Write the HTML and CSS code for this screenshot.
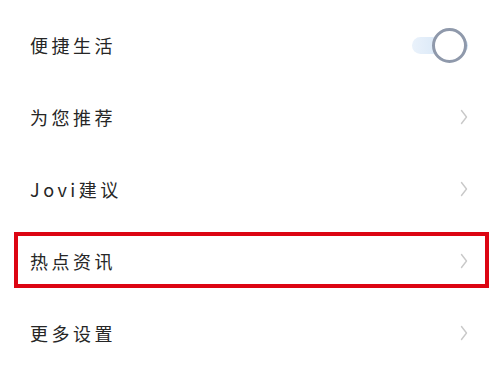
FILE: index.html
```html
<!DOCTYPE html>
<html lang="zh">
<head>
<meta charset="utf-8">
<link rel="stylesheet" href="styles.css">
</head>
<body>
<ul class="list">
  <li class="row">
    <span class="label">便捷生活</span>
    <span class="toggle"><span class="knob"></span></span>
  </li>
  <li class="row">
    <span class="label">为您推荐</span>
    <svg class="chev" viewBox="0 0 8 16" width="8" height="16"><path d="M1.5 1.5 L6.5 8 L1.5 14.5" fill="none" stroke="#c9c9c9" stroke-width="1.4" stroke-linecap="round" stroke-linejoin="round"/></svg>
  </li>
  <li class="row">
    <span class="label">Jovi建议</span>
    <svg class="chev" viewBox="0 0 8 16" width="8" height="16"><path d="M1.5 1.5 L6.5 8 L1.5 14.5" fill="none" stroke="#c9c9c9" stroke-width="1.4" stroke-linecap="round" stroke-linejoin="round"/></svg>
  </li>
  <li class="row highlight">
    <span class="label">热点资讯</span>
    <svg class="chev" viewBox="0 0 8 16" width="8" height="16"><path d="M1.5 1.5 L6.5 8 L1.5 14.5" fill="none" stroke="#c9c9c9" stroke-width="1.4" stroke-linecap="round" stroke-linejoin="round"/></svg>
  </li>
  <li class="row">
    <span class="label">更多设置</span>
    <svg class="chev" viewBox="0 0 8 16" width="8" height="16"><path d="M1.5 1.5 L6.5 8 L1.5 14.5" fill="none" stroke="#c9c9c9" stroke-width="1.4" stroke-linecap="round" stroke-linejoin="round"/></svg>
  </li>
</ul>
</body>
</html>
```

FILE: styles.css
```css
html, body {
  margin: 0;
  padding: 0;
  background: #ffffff;
}
body {
  width: 500px;
  height: 375px;
  overflow: hidden;
  font-family: "Noto Sans CJK SC", "Noto Sans", sans-serif;
  color: #262626;
}
.list {
  list-style: none;
  margin: 0;
  padding: 9px 0 0 0;
}
.row {
  position: relative;
  height: 72px;
  display: flex;
  align-items: center;
  justify-content: space-between;
  padding: 0 32px 0 30px;
}
.label {
  font-size: 18px;
  letter-spacing: 3.5px;
  font-weight: 400;
}
.chev {
  display: block;
}
.toggle {
  position: relative;
  width: 56px;
  height: 17px;
  border-radius: 9px;
  background: linear-gradient(90deg, #eaf2fb, #c9def3);
}
.knob {
  position: absolute;
  right: 1px;
  top: 50%;
  width: 29px;
  height: 29px;
  margin-top: -17.5px;
  border: 3px solid #8f99ab;
  border-radius: 50%;
  background: #ffffff;
}
.highlight::after {
  content: "";
  position: absolute;
  left: 14px;
  right: 11px;
  top: 7px;
  bottom: 9px;
  border: 4px solid #dc0512;
  pointer-events: none;
}
```
